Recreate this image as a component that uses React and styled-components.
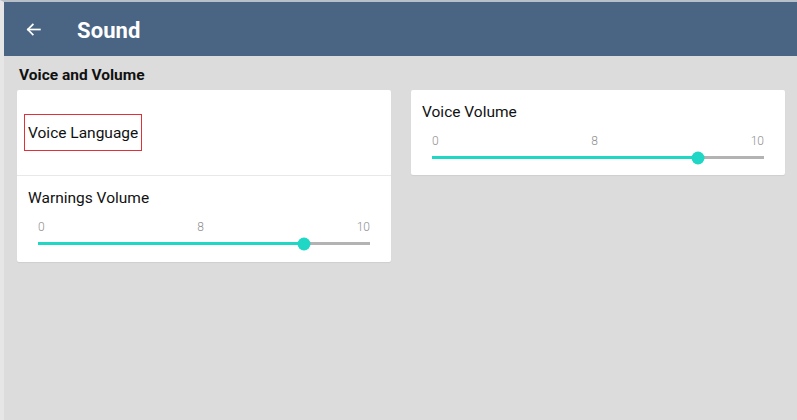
import React from 'react'
import styled, { createGlobalStyle } from 'styled-components'

const Global = createGlobalStyle`
  html, body {
    margin: 0;
    padding: 0;
    background: #dcdcdc;
    font-family: Roboto, "Noto Sans", Arial, sans-serif;
  }
`

const Screen = styled.div`
  width: 797px;
  height: 420px;
  box-sizing: border-box;
  border-top: 2px solid #b7bfc8;
  border-left: 4px solid #e6e6e6;
  background: #dcdcdc;
  display: flex;
  flex-direction: column;
`

const Header = styled.header`
  height: 54px;
  background: #4a6584;
  display: flex;
  align-items: center;
  padding-left: 21px;
  gap: 21px;
  color: #fff;
`

const BackButton = styled.button`
  background: none;
  border: 0;
  padding: 0;
  width: 31px;
  display: flex;
  align-items: center;
  color: #fff;
`

const Title = styled.h1`
  margin: 0;
  padding-top: 2px;
  font-size: 22px;
  font-weight: 700;
  letter-spacing: 0.1px;
`

const Content = styled.main`
  padding: 0 12px 0 13px;
`

const SectionTitle = styled.h2`
  margin: 0;
  height: 34px;
  box-sizing: border-box;
  padding: 4px 0 0 2px;
  display: flex;
  align-items: center;
  font-size: 15.5px;
  font-weight: 700;
  color: #111;
`

const Columns = styled.div`
  display: grid;
  grid-template-columns: 374px 374px;
  gap: 20px;
  align-items: start;
`

const Card = styled.section`
  background: #fff;
  border-radius: 2px;
  box-shadow: 0 1px 1px rgba(0, 0, 0, 0.06);
`

const Item = styled.div`
  height: ${(p) => p.$h}px;
  box-sizing: border-box;
  padding: ${(p) => (p.$center ? '0 7px' : '13px 21px 0 11px')};
  display: flex;
  flex-direction: column;
  justify-content: ${(p) => (p.$center ? 'center' : 'flex-start')};
  border-top: ${(p) => (p.$divider ? '1px solid #e8e8e8' : 'none')};
`

const LinkLabel = styled.span`
  align-self: flex-start;
  border: 1px solid #e0303a;
  height: 37px;
  box-sizing: border-box;
  padding: 0 3px;
  display: flex;
  align-items: center;
  font-size: 15.5px;
  color: #111;
`

const ItemLabel = styled.div`
  font-size: 15.5px;
  color: #111;
  line-height: 18px;
`

const Ticks = styled.div`
  display: flex;
  justify-content: space-between;
  margin: 13px 0 0 10px;
  font-size: 12px;
  font-weight: 300;
  color: #8f8f8f;
`

const Track = styled.div`
  position: relative;
  height: 3px;
  margin: 8px 0 0 10px;
  background: #b3b3b3;
`

const Fill = styled.div`
  height: 100%;
  background: #20d6c4;
`

const Thumb = styled.div`
  position: absolute;
  top: 50%;
  width: 13px;
  height: 13px;
  border-radius: 50%;
  background: #20d6c4;
  transform: translate(-50%, -50%);
`

function Slider({ min, max, value }) {
  const pct = ((value - min) / (max - min)) * 100
  return (
    <>
      <Ticks>
        <span>{min}</span>
        <span>{value}</span>
        <span>{max}</span>
      </Ticks>
      <Track>
        <Fill style={{ width: `${pct}%` }} />
        <Thumb style={{ left: `${pct}%` }} />
      </Track>
    </>
  )
}

function ArrowLeft() {
  return (
    <svg width='17' height='17' viewBox='0 0 24 24' fill='none' stroke='#fff' strokeWidth='2.4' strokeLinecap='square'>
      <path d='M21 12H4' />
      <path d='M11 5l-7 7 7 7' />
    </svg>
  )
}

export default function App() {
  return (
    <Screen>
      <Global />
      <Header>
        <BackButton aria-label='back'>
          <ArrowLeft />
        </BackButton>
        <Title>Sound</Title>
      </Header>
      <Content>
        <SectionTitle>Voice and Volume</SectionTitle>
        <Columns>
          <Card>
            <Item $h={85} $center>
              <LinkLabel>Voice Language</LinkLabel>
            </Item>
            <Item $h={87} $divider>
              <ItemLabel>Warnings Volume</ItemLabel>
              <Slider min={0} max={10} value={8} />
            </Item>
          </Card>
          <Card>
            <Item $h={85}>
              <ItemLabel>Voice Volume</ItemLabel>
              <Slider min={0} max={10} value={8} />
            </Item>
          </Card>
        </Columns>
      </Content>
    </Screen>
  )
}
